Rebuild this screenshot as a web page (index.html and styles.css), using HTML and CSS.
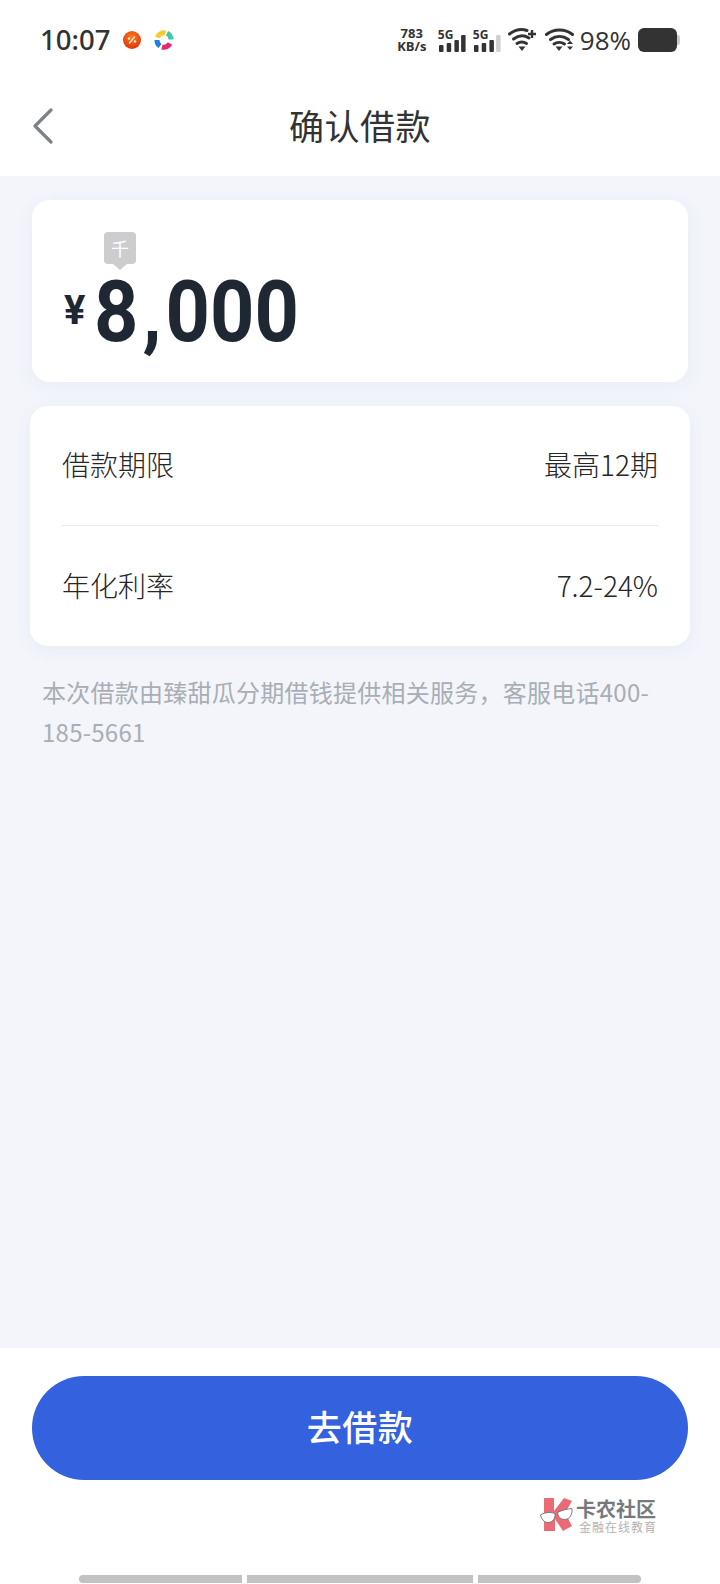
FILE: index.html
```html
<!DOCTYPE html>
<html lang="zh">
<head>
<meta charset="utf-8">
<title>确认借款</title>
<link rel="stylesheet" href="styles.css">
</head>
<body>
<div class="page">
  <header class="top">
    <div class="status">
      <div class="status-left">
        <span class="time">10:07</span>
        <svg class="app-ico first" width="18" height="18" viewBox="0 0 18 18"><defs><radialGradient id="og" cx=".5" cy=".35" r=".7"><stop offset="0" stop-color="#f9801c"/><stop offset="1" stop-color="#e22c08"/></radialGradient></defs><circle cx="9" cy="9" r="9" fill="url(#og)"/><path d="M6.500 12l5-6" stroke="#ffe6d0" stroke-width="1.400" stroke-linecap="round"/><circle cx="6" cy="7.500" r="1.200" fill="#ffe6d0"/><circle cx="12" cy="10.500" r="1.200" fill="#ffe6d0"/></svg>
        <svg class="app-ico second" width="20" height="20" viewBox="0 0 20 20"><g fill="none" stroke-width="5"><path d="M3.500 7.500A7 7 0 0 1 11.500 3" stroke="#f6cb2e"/><path d="M13 3.200A7 7 0 0 1 17 9.500" stroke="#42c6a6"/><path d="M3 10a7 7 0 0 0 3 6" stroke="#1c7fdc"/><path d="M8 17a7 7 0 0 0 8-3.500" stroke="#e8256f"/></g></svg>
      </div>
      <div class="status-right">
        <span class="speed"><span>783</span><span>KB/s</span></span>
        <span class="sig"><span class="sig-label">5G</span>
          <svg width="28" height="17" viewBox="0 0 28 17"><g fill="#333"><rect x="1" y="10" width="4.500" height="7" rx="1"/><rect x="8.700" y="8" width="4.500" height="9" rx="1"/><rect x="16.400" y="5" width="4.500" height="12" rx="1"/><rect x="23.100" y="0" width="4.500" height="17" rx="1"/></g></svg>
        </span>
        <span class="sig second"><span class="sig-label">5G</span>
          <svg width="28" height="17" viewBox="0 0 28 17"><g fill="#333"><rect x="1" y="10" width="4.500" height="7" rx="1"/><rect x="8.700" y="8" width="4.500" height="9" rx="1"/><rect x="16.400" y="5" width="4.500" height="12" rx="1"/></g><rect x="23.100" y="0" width="4.500" height="17" rx="1" fill="#d0d0d0"/></svg>
        </span>
        <svg class="wifi one" width="28" height="24" viewBox="0 0 28 24"><g fill="none" stroke="#333" stroke-width="3" stroke-linecap="round"><path d="M1.500 6C7.500 1.500 14 .8 19 2.500"/><path d="M5.500 11c5-3.800 11-3.800 15.500-1"/><path d="M9 15.500c3-2 6.500-2 9.500 0"/></g><path d="M10.500 18.500h7l-3.500 4.500z" fill="#333"/><path d="M20 6h8M24 2v8" stroke="#333" stroke-width="2.400"/></svg>
        <svg class="wifi two" width="29" height="24" viewBox="0 0 29 24"><g fill="none" stroke="#333" stroke-width="3" stroke-linecap="round"><path d="M1.500 6.500c7.500-6 18.500-6 26 0"/><path d="M5.500 11.500c5.500-4 12.500-4 18 0"/><path d="M9 16c3-2 7.500-2 10.500 0"/></g><path d="M10.500 18.500h7l-3.500 4.500z" fill="#333"/><path d="M25 12.500l3 3.500h-6zM22 18.500h6l-3 3.500z" fill="#333"/></svg>
        <span class="pct">98%</span>
        <span class="battery"><span class="battery-body"></span><span class="battery-cap"></span></span>
      </div>
    </div>
    <div class="nav">
      <svg class="back" width="22" height="36" viewBox="0 0 22 36"><path d="M19 2L3 18l16 16" fill="none" stroke="#7d8186" stroke-width="3.200" stroke-linecap="round" stroke-linejoin="round"/></svg>
      <h1 class="title">确认借款</h1>
    </div>
  </header>

  <main class="content">
    <section class="amount-card">
      <div class="unit-tag">千</div>
      <div class="amount"><span class="currency">¥</span><span class="value">8<span class="comma">,</span>000</span></div>
    </section>

    <section class="info-card">
      <div class="info-row"><span>借款期限</span><span>最高12期</span></div>
      <div class="info-row divided"><span>年化利率</span><span>7.2-24%</span></div>
    </section>

    <p class="note">本次借款由臻甜瓜分期借钱提供相关服务，客服电话400-185-5661</p>
  </main>

  <footer class="bottom">
    <button class="cta" type="button">去借款</button>
    <div class="watermark">
      <svg width="34" height="36" viewBox="0 0 34 36"><path d="M5 1h10v13L25 1l8 3-7 12 7 13-9 5-8-12v12H5z" fill="#ea6a76"/><path d="M1.500 18C6 15 12 15 16 16.500c.5 4.500-2 9-7 9-4 0-6.500-3.500-7.500-7.500zM18.500 15.500C23 13 28 12 33 11.500c.5 5.500-2 11-7.500 11-4 0-6.500-3-7-7z" fill="#fff" stroke="#77797d" stroke-width="1"/></svg>
      <div class="wm-text"><span class="wm-main">卡农社区</span><span class="wm-sub">金融在线教育</span></div>
    </div>
    <div class="nav-pills"><span class="pill a"></span><span class="pill b"></span><span class="pill c"></span></div>
  </footer>
</div>
</body>
</html>
```
FILE: styles.css
```css
* { box-sizing: border-box; }
html, body { margin: 0; padding: 0; }
body { font-family: "Noto Sans CJK SC", "Noto Sans", sans-serif; background: #fff; }
.page { width: 720px; height: 1584px; display: flex; flex-direction: column; background: #f3f5fb; overflow: hidden; }

.top { height: 176px; background: #fff; flex: none; }
.status { height: 80px; display: flex; justify-content: space-between; align-items: center; padding: 0 40px; }
.status-left { display: flex; align-items: center; }
.time { font: 500 27.500px/1 "Noto Sans", sans-serif; color: #333; width: 70px; white-space: nowrap; }
.app-ico.first { margin-left: 13px; }
.app-ico.second { margin-left: 13px; }
.status-right { display: flex; align-items: center; color: #333; }
.speed { display: flex; flex-direction: column; align-items: center; font: 700 13px/13px "Open Sans", sans-serif; width: 32px; }
.sig { display: flex; flex-direction: column; width: 28px; margin-left: 10px; padding-top: 1px; }
.sig.second { margin-left: 7px; }
.sig-label { font: 700 12px/11px "Open Sans", sans-serif; margin-bottom: -5px; }
.wifi.one { margin-left: 7px; }
.wifi.two { margin-left: 9px; }
.pct { font: 400 26px/1 "Open Sans", sans-serif; margin-left: 6px; }
.battery { display: flex; align-items: center; margin-left: 7px; }
.battery-body { width: 39px; height: 24px; background: #333; border-radius: 6px; }
.battery-cap { width: 3px; height: 10px; background: #ccc; border-radius: 0 2px 2px 0; }

.nav { height: 96px; display: flex; align-items: center; justify-content: center; position: relative; padding-bottom: 8px; }
.back { position: absolute; left: 32px; top: 28px; }
.title { margin: 0; font: 400 35px/1 "Noto Sans CJK SC", sans-serif; color: #333; letter-spacing: .5px; }

.content { flex: 1; padding: 24px 30px 0; display: flex; flex-direction: column; }
.amount-card { margin: 0 2px; height: 182px; background: #fff; border-radius: 18px; padding: 32px 32px 0; box-shadow: 0 4px 20px rgba(60,80,140,.05); }
.unit-tag { width: 32px; height: 32px; margin-left: 40px; background: #cdcdd0; color: #fff; border-radius: 4px; font-size: 18px; line-height: 32px; text-align: center; position: relative; }
.unit-tag::after { content: ""; position: absolute; left: 9px; top: 32px; border: 7px solid transparent; border-top: 6px solid #cdcdd0; border-bottom: 0; }
.amount { display: flex; align-items: baseline; color: #1f2733; margin-top: 12px; }
.currency { font: 700 40px/1 Roboto, sans-serif; width: 30px; position: relative; top: -17px; }
.value { font: 700 86px/72px Roboto, sans-serif; display: inline-block; transform: scaleX(.9); transform-origin: left center; white-space: nowrap; }
.comma { margin: 0 4.500px; }

.info-card { margin-top: 24px; height: 240px; background: #fff; border-radius: 18px; padding: 0 32px; box-shadow: 0 4px 20px rgba(60,80,140,.06); }
.info-row { height: 119px; display: flex; justify-content: space-between; align-items: center; font: 300 28px/1 "Noto Sans CJK SC", sans-serif; color: #262626; padding-bottom: 3px; }
.info-row.divided { border-top: 1px solid #e8eaef; height: 121px; }

.note { margin: 26px 10px 0 12px; font-size: 24px; line-height: 40px; color: #a9adb5; letter-spacing: .25px; }

.bottom { height: 236px; flex: none; background: #fff; padding: 28px 32px 0; display: flex; flex-direction: column; }
.cta { flex: none; height: 104px; border: 0; border-radius: 52px; background: #3461dd; color: #fff; font: 500 35px/1 "Noto Sans CJK SC", sans-serif; letter-spacing: .5px; padding: 0 0 6px; }
.watermark { display: flex; align-items: center; align-self: flex-end; margin: 17px 31px 0 0; gap: 3px; }
.wm-text { display: flex; flex-direction: column; }
.wm-main { font: 700 20px/22px "Noto Sans CJK SC", sans-serif; color: #77797d; }
.wm-sub { font: 400 12px/13px "Noto Sans CJK SC", sans-serif; color: #b2b2b4; letter-spacing: 1px; margin-left: 3px; }
.nav-pills { display: flex; justify-content: center; gap: 5px; margin-top: 42px; }
.pill { height: 8px; background: #c2c2c2; }
.pill.a { width: 163px; border-radius: 4px 0 0 4px; }
.pill.b { width: 226px; }
.pill.c { width: 163px; border-radius: 0 4px 4px 0; }
```
